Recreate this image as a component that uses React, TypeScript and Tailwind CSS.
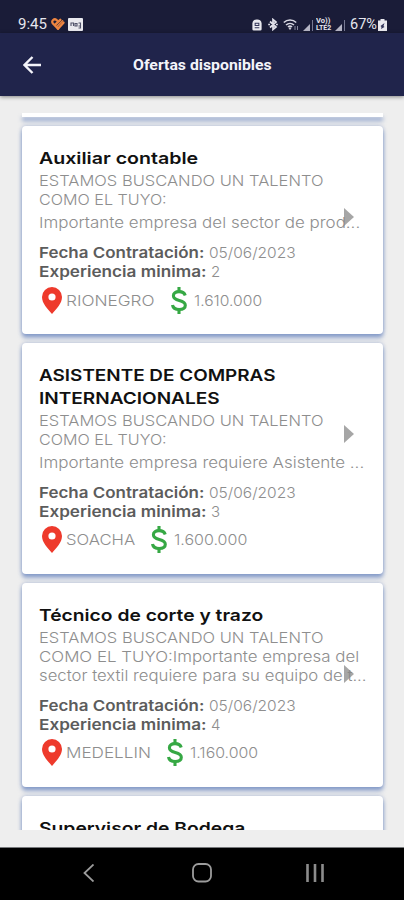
import { useLayoutEffect, useRef, useState } from 'react'
import clsx from 'clsx'

type Line = { text: string; width: number }

type Offer = {
  id: number
  title: Line[]
  description: Line[]
  // the last description line starts its own paragraph
  split?: boolean
  date: string
  experience: string
  city: Line
  salary: Line
}

const offers: Offer[] = [
  {
    id: 1,
    title: [{ text: 'Auxiliar contable', width: 159 }],
    description: [
      { text: 'ESTAMOS BUSCANDO UN TALENTO', width: 284 },
      { text: 'COMO EL TUYO:', width: 128 },
      { text: 'Importante empresa del sector de prod...', width: 321 },
    ],
    split: true,
    date: '05/06/2023',
    experience: '2',
    city: { text: 'RIONEGRO', width: 89 },
    salary: { text: '1.610.000', width: 68 },
  },
  {
    id: 2,
    title: [
      { text: 'ASISTENTE DE COMPRAS', width: 236 },
      { text: 'INTERNACIONALES', width: 181 },
    ],
    description: [
      { text: 'ESTAMOS BUSCANDO UN TALENTO', width: 284 },
      { text: 'COMO EL TUYO:', width: 128 },
      { text: 'Importante empresa requiere Asistente ...', width: 325 },
    ],
    split: true,
    date: '05/06/2023',
    experience: '3',
    city: { text: 'SOACHA', width: 69 },
    salary: { text: '1.600.000', width: 73 },
  },
  {
    id: 3,
    title: [{ text: 'Técnico de corte y trazo', width: 224 }],
    description: [
      { text: 'ESTAMOS BUSCANDO UN TALENTO', width: 284 },
      { text: 'COMO EL TUYO:Importante empresa del', width: 320 },
      { text: 'sector textil requiere para su equipo de t...', width: 328 },
    ],
    date: '05/06/2023',
    experience: '4',
    city: { text: 'MEDELLIN', width: 85 },
    salary: { text: '1.160.000', width: 68 },
  },
  {
    id: 4,
    title: [{ text: 'Supervisor de Bodega', width: 207 }],
    description: [],
    date: '',
    experience: '',
    city: { text: '', width: 0 },
    salary: { text: '', width: 0 },
  },
]

// Stretches a line of text to the given width
function FitText({ text, width, className }: Line & { className?: string }) {
  const ref = useRef<HTMLSpanElement>(null)
  const [scale, setScale] = useState(1)

  useLayoutEffect(() => {
    if (ref.current) setScale(width / ref.current.offsetWidth)
  }, [width])

  return (
    <span className={clsx('block whitespace-nowrap', className)} style={{ width }}>
      <span ref={ref} className="inline-block origin-left" style={{ transform: `scaleX(${scale})` }}>
        {text}
      </span>
    </span>
  )
}

function StatusBar() {
  return (
    <div className="flex h-[33px] shrink-0 items-end bg-[#1a1c38] pr-[17px] pl-[18px] text-[#e6e6ee]">
      <FitText text="9:45" width={29} className="h-[17px] text-[14px] leading-[17px]" />
      <svg className="mb-[3px] ml-1 h-[12px] w-[14px]" viewBox="0 0 15 13" fill="none" stroke="#ee8540" strokeLinecap="round">
        <path d="M7.5 11.5 1.800 5.800A2.800 2.800 0 0 1 5.800 2L7 3.200" strokeWidth="2.4" />
        <path d="M4.800 7 10 2M7.500 11.500 13.400 5" strokeWidth="2.6" />
        <path d="M6.500 9 12.500 3" strokeWidth="1.6" />
      </svg>
      <svg className="mb-[2px] ml-[3px] h-[13px] w-[15px]" viewBox="0 0 15 13">
        <rect width="15" height="13" rx="1" fill="#e9e9ef" />
        <path d="M3 8V5h2.5v3M7 5.5h2V8H7zM10.5 5h2v5h-2M10.5 8h2" fill="none" stroke="#50526a" strokeWidth="1.1" />
      </svg>

      <div className="ml-auto flex h-[17px] items-center">
        <svg className="h-[12px] w-[10px]" viewBox="0 0 10 13">
          <path d="M0 4.5A4.5 4.5 0 0 1 5 .5a4.5 4.5 0 0 1 5 4V11a1.5 1.5 0 0 1-1.5 1.5h-7A1.5 1.5 0 0 1 0 11z" fill="#e9e9ef" />
          <path d="M3 4.5h4V7H3zM2.5 9.5h5" fill="none" stroke="#33355a" strokeWidth="1.1" />
        </svg>
        <svg className="ml-[6px] h-[13px] w-[10px]" viewBox="0 0 10 13" fill="none" stroke="#e0e0ea" strokeWidth="1.7">
          <path d="m2 3.5 6 5.5-3 2.5v-10L8 4 2 9.5M.2 6.5H2M8 6.5h1.8" />
        </svg>
        <svg className="ml-[5px] h-[13px] w-[16px]" viewBox="0 0 16 13" fill="none" stroke="#d8d8e3" strokeWidth="1.6">
          <path d="M.8 4.5a9 9 0 0 1 12.4 0M3 7a6 6 0 0 1 8 0M5 9a3 3 0 0 1 4 0" />
          <path d="M6 10h2l-1 1.5z" strokeWidth="1" />
          <path d="M12 8v4M14.5 8v4" stroke="#85879d" strokeWidth="1" />
        </svg>
        <svg className="ml-[4px] h-[12px] w-[10px]" viewBox="0 0 10 12">
          <path d="M0 12 7 5v7z" fill="#b5b5c5" />
          <path d="M9.5 1v11" stroke="#777993" />
        </svg>
        <span className="ml-[3px] flex w-[15px] flex-col text-[7px] leading-[7px] font-bold">
          <FitText text="Vo))" width={14} className="h-[7px]" />
          <FitText text="LTE2" width={15} className="h-[7px]" />
        </span>
        <svg className="ml-[4px] h-[12px] w-[10px]" viewBox="0 0 10 12">
          <path d="M0 12 7 5v7z" fill="#b5b5c5" />
          <path d="M9.5 1v11" stroke="#777993" />
        </svg>
        <FitText text="67%" width={27} className="ml-[5px] text-[14px] leading-[17px]" />
        <svg className="ml-px h-[12px] w-[9px]" viewBox="0 0 9 12">
          <path d="M2.5 0h4v1.5H9V12H0V1.5h2.5z" fill="#e9e9ef" />
          <path d="m2.5 7 4-3-1 3 1 1-3.5 2 .5-2z" fill="#33355a" />
        </svg>
      </div>
    </div>
  )
}

function Header() {
  return (
    <header className="relative z-10 flex h-[63px] shrink-0 items-center bg-[#20244b] pt-px shadow-[0_1px_4px_rgba(0,0,0,0.45)]">
      <svg className="ml-[23px] h-[18px] w-[18px]" viewBox="0 0 18 18" fill="none" stroke="#f4f4fa" strokeWidth="2.4">
        <path d="M18 9H1.5M9.5 1 1.5 9l8 8" />
      </svg>
      <h1 className="ml-[92px] text-[15px] leading-5 font-bold text-[#f4f4fa]">
        <FitText text="Ofertas disponibles" width={139} />
      </h1>
    </header>
  )
}

function OfferCard({ offer }: { offer: Offer }) {
  return (
    <article className="relative shrink-0 rounded-[4px] bg-white pt-[21px] pr-3 pb-5 pl-[17px] shadow-[0_4px_4px_rgba(75,110,180,0.55),0_0_4px_rgba(75,110,180,0.4)]">
      <h2 className="text-[16.5px] leading-[22.5px] font-semibold text-[#111111]">
        {offer.title.map((line) => (
          <FitText key={line.text} {...line} />
        ))}
      </h2>

      {offer.description.length > 0 && (
        <>
          <div className="mt-[1.5px] text-[15px] leading-[19px] font-light text-[#8e8e8e]">
            {offer.description.map((line, i) => (
              <FitText key={line.text} {...line} className={clsx(offer.split && i === 2 && 'mt-[4px]')} />
            ))}
          </div>

          <div className="mt-[11px] text-[15px] leading-[19px] font-light text-[#8e8e8e]">
            <p className="flex gap-[5px]">
              <FitText text="Fecha Contratación:" width={165} className="font-semibold text-[#5c5c5c]" />
              <FitText text={offer.date} width={87} />
            </p>
            <p className="flex gap-[5px]">
              <FitText text="Experiencia minima:" width={167} className="font-semibold text-[#5c5c5c]" />
              <FitText text={offer.experience} width={9} />
            </p>
          </div>

          <div className="mt-[5px] flex h-7 items-center text-[14.5px] leading-[19px] font-light text-[#8e8e8e]">
            <svg className="ml-[3px] h-[27px] w-5" viewBox="0 0 20 27">
              <path
                d="M10 0A10 10 0 0 0 0 10c0 6.500 5.500 11.500 10 17 4.500-5.500 10-10.500 10-17A10 10 0 0 0 10 0zm0 6.400a3.600 3.600 0 1 1 0 7.200 3.600 3.600 0 0 1 0-7.200z"
                fill="#ee3a2c"
              />
            </svg>
            <FitText {...offer.city} className="ml-1" />
            <svg className="ml-4 h-[27px] w-4" viewBox="0 0 16 27" fill="none" stroke="#36a844" strokeWidth="3.1">
              <path d="M8 0v4.5M8 22.5V27" />
              <path d="M14.200 8.500C13.500 5.800 11.300 4.600 8 4.600c-3.400 0-5.600 1.600-5.600 4.100 0 2.700 2.300 3.800 5.900 4.700 3.800.9 6 2.100 6 4.900 0 2.600-2.300 4.200-6.100 4.200-3.700 0-6.200-1.500-6.700-4.400" />
            </svg>
            <FitText {...offer.salary} className="ml-[7px]" />
          </div>
        </>
      )}

      <svg className="absolute top-[82px] right-[29px] h-[18px] w-[10px]" viewBox="0 0 10 18">
        <path d="M0 0v18l10-9z" fill="#888888" fillOpacity="0.75" />
      </svg>
    </article>
  )
}

function NavBar() {
  return (
    <nav className="flex h-[53px] shrink-0 items-center border-t border-[#77797c] bg-black pb-[3px]">
      <svg className="ml-[83px] h-[18px] w-[11px]" viewBox="0 0 11 18" fill="none" stroke="#9c9c9c" strokeWidth="1.8">
        <path d="m10.5 .5-9 8.5 9 8.5" />
      </svg>
      <svg className="ml-[98px] h-5 w-5" viewBox="0 0 20 20" fill="none" stroke="#9c9c9c" strokeWidth="1.8">
        <rect x="1" y="1" width="18" height="17.5" rx="5.5" />
      </svg>
      <svg className="ml-[94px] h-[18px] w-[18px]" viewBox="0 0 18 18" stroke="#8c8c8c" strokeWidth="2.6">
        <path d="M1.5 0v18M9 0v18M16.5 0v18" />
      </svg>
    </nav>
  )
}

export default function App() {
  return (
    <div className="flex h-[900px] w-[404px] flex-col overflow-hidden bg-[#eeeeee] font-[Roboto,sans-serif]">
      <StatusBar />
      <Header />
      <main className="mt-[17px] mb-[17px] flex min-h-0 flex-1 flex-col gap-[9px] overflow-hidden pr-[21px] pl-[22px] font-[Inter,sans-serif]">
        {/* tail of the card scrolled off the top */}
        <div className="h-[4px] shrink-0 bg-white shadow-[0_4px_4px_rgba(75,110,180,0.55)]" />
        {offers.map((offer) => (
          <OfferCard key={offer.id} offer={offer} />
        ))}
      </main>
      <NavBar />
    </div>
  )
}
